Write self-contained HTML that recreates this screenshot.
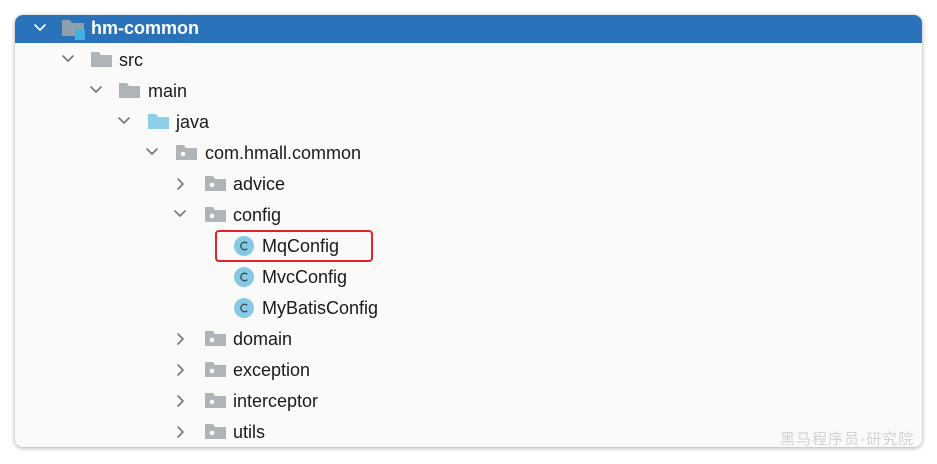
<!DOCTYPE html>
<html><head><meta charset="utf-8"><style>
html,body{margin:0;padding:0;background:#fff;width:937px;height:464px;overflow:hidden}
.panel{position:absolute;left:15px;top:15px;width:907px;height:432px;background:#fafbf8;border-radius:8px;box-shadow:0 1px 5px rgba(0,0,0,.35);overflow:hidden}
.hdr{position:absolute;left:0;top:0;width:907px;height:28px;background:#2a73ba}
.r{position:absolute;height:31px;font-family:"Liberation Sans","DejaVu Sans",sans-serif;font-size:18px;color:#1a1a1a;line-height:31px;white-space:nowrap}
svg{position:absolute}
.wm{position:absolute;left:780px;top:428px;font-family:"Noto Sans CJK SC",sans-serif;font-size:15px;color:#d0d3d0;letter-spacing:1px}
</style></head><body>
<div class="panel"><div class="hdr"></div></div>
<div class="wm">黑马程序员-研究院</div>
<svg width="937" height="464" style="left:0;top:0">
<g fill="none" stroke-width="1.6" stroke-linecap="round" stroke-linejoin="round">
<path d="M35 25l5 5 5-5" stroke="#fff"/>
<path d="M63 56l5 5 5-5" stroke="#777"/>
<path d="M91 87l5 5 5-5" stroke="#777"/>
<path d="M119 118l5 5 5-5" stroke="#777"/>
<path d="M147 149l5 5 5-5" stroke="#777"/>
<path d="M178 179l5 5-5 5" stroke="#777"/>
<path d="M175 211l5 5 5-5" stroke="#777"/>
<path d="M178 334l5 5-5 5" stroke="#777"/>
<path d="M178 365l5 5-5 5" stroke="#777"/>
<path d="M178 396l5 5-5 5" stroke="#777"/>
<path d="M178 427l5 5-5 5" stroke="#777"/>
</g>
<path d="M62 20h8l2 3h12v13h-22z" fill="#8fa0ad"/>
<rect x="75" y="30" width="10" height="10" fill="#3fb0e0"/>
<path d="M91 52h8l2 3h11v12h-21z" fill="#afb4b9"/>
<path d="M119 83h8l2 3h11v12h-21z" fill="#afb4b9"/>
<path d="M148 114h8l2 3h11v12h-21z" fill="#8dcfe8"/>
<g fill="#afb4b9">
<path d="M176 145h8l2 3h11v12h-21z"/>
<path d="M205 176h8l2 3h11v12h-21z"/>
<path d="M205 207h8l2 3h11v12h-21z"/>
<path d="M205 331h8l2 3h11v12h-21z"/>
<path d="M205 362h8l2 3h11v12h-21z"/>
<path d="M205 393h8l2 3h11v12h-21z"/>
<path d="M205 424h8l2 3h11v12h-21z"/>
</g>
<g fill="#fafbf8">
<circle cx="183" cy="154" r="2.3"/><circle cx="212" cy="185" r="2.3"/><circle cx="212" cy="216" r="2.3"/>
<circle cx="212" cy="340" r="2.3"/><circle cx="212" cy="371" r="2.3"/><circle cx="212" cy="402" r="2.3"/><circle cx="212" cy="433" r="2.3"/>
</g>
<g fill="#86c9e5"><circle cx="244" cy="246" r="10"/><circle cx="244" cy="277" r="10"/><circle cx="244" cy="308" r="10"/></g>
<g fill="none" stroke="#3c4a54" stroke-width="1.3">
<path d="M247.3 243.3a3.8 3.8 0 1 0 0 5.4"/><path d="M247.3 274.3a3.8 3.8 0 1 0 0 5.4"/><path d="M247.3 305.3a3.8 3.8 0 1 0 0 5.4"/>
</g>
<rect x="216" y="231" width="156" height="30" rx="3" fill="none" stroke="#e0232b" stroke-width="2"/>
</svg>
<div class="r" style="left:91px;top:13px;color:#fff;font-weight:bold">hm-common</div>
<div class="r" style="left:119px;top:45px">src</div>
<div class="r" style="left:148px;top:76px">main</div>
<div class="r" style="left:176px;top:107px">java</div>
<div class="r" style="left:205px;top:138px">com.hmall.common</div>
<div class="r" style="left:233px;top:169px">advice</div>
<div class="r" style="left:233px;top:200px">config</div>
<div class="r" style="left:262px;top:231px">MqConfig</div>
<div class="r" style="left:262px;top:262px">MvcConfig</div>
<div class="r" style="left:262px;top:293px">MyBatisConfig</div>
<div class="r" style="left:233px;top:324px">domain</div>
<div class="r" style="left:233px;top:355px">exception</div>
<div class="r" style="left:233px;top:386px">interceptor</div>
<div class="r" style="left:233px;top:417px">utils</div>
</body></html>
